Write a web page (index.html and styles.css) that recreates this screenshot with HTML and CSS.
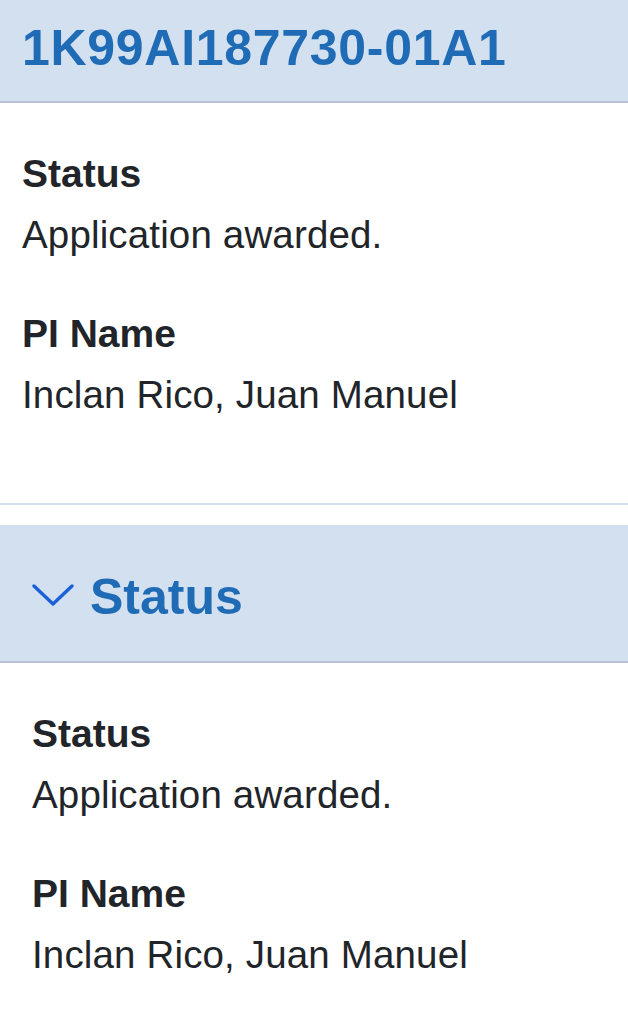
FILE: index.html
```html
<!DOCTYPE html>
<html lang="en">
<head>
    <meta charset="UTF-8">
    <title>1K99AI187730-01A1</title>
    <link rel="stylesheet" href="styles.css">
</head>
<body>
<div class="grant-card">
    <div class="grant-header">
        <h2 class="grant-title">1K99AI187730-01A1</h2>
    </div>
    <dl class="grant-body">
        <dt>Status</dt>
        <dd>Application awarded.</dd>
        <dt>PI Name</dt>
        <dd>Inclan Rico, Juan Manuel</dd>
    </dl>
</div>

<div class="accordion">
    <button class="accordion-header" type="button">
        <svg class="chevron" width="42" height="22" viewBox="0 0 42 22">
            <polyline points="2,2 21,20 40,2" fill="none" stroke="#1b60d8" stroke-width="3.4" stroke-linecap="round" stroke-linejoin="round"/>
        </svg>
        <span>Status</span>
    </button>
    <dl class="accordion-body">
        <dt>Status</dt>
        <dd>Application awarded.</dd>
        <dt>PI Name</dt>
        <dd>Inclan Rico, Juan Manuel</dd>
    </dl>
</div>
</body>
</html>
```

FILE: styles.css
```css
body {
    font-family: "Liberation Sans", Arial, sans-serif;
    margin: 0;
    padding: 0;
    background-color: #fff;
    color: #212529;
}
.grant-card {
    border-bottom: 2px solid #d6dee9;
    margin-bottom: 20px;
}
.grant-header {
    background-color: #d3e0f0;
    border-bottom: 2px solid #b9c3d6;
    padding: 2px 22px 7px;
}
.grant-title {
    margin: 0;
    font-size: 50px;
    line-height: 92px;
    font-weight: bold;
    letter-spacing: 0.7px;
    color: #1f6bb5;
}
.grant-body, .accordion-body {
    margin: 0;
    padding: 41px 22px 77px;
}
.accordion-body {
    padding: 41px 32px 40px;
}
dt {
    font-size: 39px;
    font-weight: bold;
    line-height: 60px;
}
dd {
    margin: 0 0 38px;
    font-size: 38.5px;
    line-height: 62px;
    letter-spacing: 0.15px;
}
dd:last-child {
    margin-bottom: 0;
}
.accordion-header {
    display: flex;
    align-items: center;
    gap: 16px;
    width: 100%;
    height: 138px;
    padding: 8px 32px 0;
    box-sizing: border-box;
    background-color: #d3e0f0;
    border: none;
    border-bottom: 2px solid #b9c3d6;
    font-family: inherit;
    font-size: 50px;
    font-weight: bold;
    color: #1f6bb5;
    text-align: left;
    cursor: pointer;
}
.chevron {
    flex-shrink: 0;
    margin-top: -4px;
}
```
